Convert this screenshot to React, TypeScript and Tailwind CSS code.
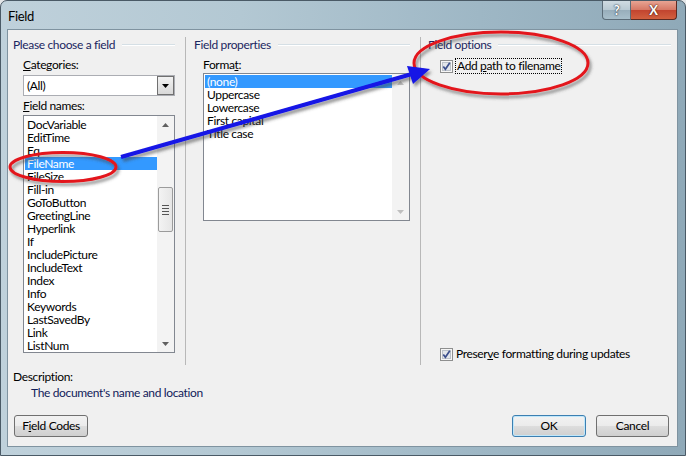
import React from 'react';

const fieldNames = [
  'DocVariable', 'EditTime', 'Eq', 'FileName', 'FileSize', 'Fill-in', 'GoToButton', 'GreetingLine',
  'Hyperlink', 'If', 'IncludePicture', 'IncludeText', 'Index', 'Info', 'Keywords', 'LastSavedBy',
  'Link', 'ListNum',
];

const formats = ['(none)', 'Uppercase', 'Lowercase', 'First capital', 'Title case'];

const btn =
  'h-[22px] rounded-[3px] border text-[12px] leading-[20px] text-center bg-[linear-gradient(#f2f2f2_0%,#ebebeb_50%,#dddddd_51%,#cfcfcf_100%)]';

const Arrow = ({ up, color }: { up?: boolean; color: string }) => (
  <svg width="7" height="4" viewBox="0 0 7 4">
    <path d={up ? 'M0 4 L3.5 0 L7 4 Z' : 'M0 0 L3.5 4 L7 0 Z'} fill={color} />
  </svg>
);

const CheckBox = () => (
  <svg width="13" height="13" viewBox="0 0 13 13" className="shrink-0">
    <rect x="0.5" y="0.5" width="12" height="12" fill="#f6f6f6" stroke="#8e8f8f" />
    <rect x="2.5" y="2.5" width="8" height="8" fill="#e3e6ea" stroke="#bcc2c9" />
    <path d="M3.3 6.4 L5.4 9.2 L9.8 2.8" stroke="#3c4f8c" strokeWidth="1.7" fill="none" />
  </svg>
);

const GroupHeader = ({ label, pl, mr }: { label: string; pl: string; mr: string }) => (
  <div className={`flex items-center h-[16px] ${pl}`}>
    <span className="text-[#1b2660] leading-[16px] whitespace-nowrap">{label}</span>
    <div className={`flex-1 ml-[7px] h-[2px] border-t border-[#d5dfe5] border-b-white border-b ${mr}`} />
  </div>
);

const App: React.FC = () => {
  return (
    <div className="relative w-[686px] h-[456px] bg-[#e3e6e8] font-['Lato',sans-serif] text-[12px] tracking-[-0.35px] text-black overflow-hidden">
      <div className="w-[686px] h-[456px] rounded-t-[7px] border border-[#4a5a66] bg-[linear-gradient(90deg,#bfd1db_0%,#b3c8d3_35%,#9eb7c5_70%,#8fa9b8_100%)] flex flex-col">
        {/* Title bar */}
        <div className="h-[28px] flex items-start justify-between pl-[7px] pr-[8px]">
          <span className="mt-[7px] leading-[16px] text-[13px]">Field</span>
          <div className="flex">
            <div className="w-[29px] h-[19px] rounded-bl-[4px] border border-[#5b6c78] border-t-0 bg-[linear-gradient(#cfdbe2_0%,#b8c9d3_50%,#98aebb_51%,#a8bfcb_100%)] flex items-center justify-center">
              <span className="text-white font-bold text-[13px] leading-none [text-shadow:0_0_2px_#2a3a46,0_0_1px_#2a3a46]">?</span>
            </div>
            <div className="w-[46px] h-[19px] rounded-br-[4px] border border-[#5d2a22] border-t-0 border-l-0 bg-[linear-gradient(#e8a493_0%,#d67764_50%,#c2442f_51%,#d2603f_100%)] flex items-center justify-center">
              <span className="text-white font-bold text-[13px] leading-none [text-shadow:0_0_2px_#4a1a12,0_0_1px_#4a1a12]">X</span>
            </div>
          </div>
        </div>

        {/* Client area */}
        <div className="ml-[6px] w-[671px] h-[418px] border border-[#7f93a0] bg-[#f0f0f0] flex flex-col">
          <div className="h-[335px] pt-[7px] flex">
            {/* Left column */}
            <div className="w-[177px] flex flex-col">
              <GroupHeader label="Please choose a field" pl="pl-[5px]" mr="mr-[10px]" />
              <div className="pl-[15px] flex flex-col">
                <span className="mt-[4px] leading-[16px]"><u>C</u>ategories:</span>
                <div className="mt-[2px] w-[152px] h-[21px] border border-[#abadb3] bg-white flex items-center">
                  <span className="flex-1 pl-[3px] leading-[16px]">(All)</span>
                  <div className="w-[17px] h-[19px] border border-[#707070] bg-[linear-gradient(#f2f2f2,#d8d8d8)] flex items-center justify-center">
                    <Arrow color="#000" />
                  </div>
                </div>
                <span className="mt-[2px] leading-[16px]"><u>F</u>ield names:</span>
                <div className="mt-[1px] w-[152px] h-[238px] border border-[#828790] bg-white flex">
                  <div className="flex-1 pt-[2px] pl-[1px]">
                    {fieldNames.map(name => (
                      <div
                        key={name}
                        className={`h-[13px] leading-[13px] pl-[2px] whitespace-nowrap ${
                          name === 'FileName' ? 'bg-[#3399ff] text-white' : ''
                        }`}
                      >
                        {name}
                      </div>
                    ))}
                  </div>
                  <div className="w-[17px] bg-[#f3f3f3] flex flex-col items-center">
                    <div className="h-[17px] flex items-center justify-center"><Arrow up color="#606060" /></div>
                    <div className="flex-1 w-full px-[1px] pt-[54px]">
                      <div className="h-[45px] rounded-[2px] border border-[#9b9b9b] bg-[linear-gradient(90deg,#f3f3f3,#e6e6e6)] flex flex-col items-center justify-center gap-[2px]">
                        <div className="w-[7px] h-px bg-[#555]" />
                        <div className="w-[7px] h-px bg-[#555]" />
                        <div className="w-[7px] h-px bg-[#555]" />
                        <div className="w-[7px] h-px bg-[#555]" />
                      </div>
                    </div>
                    <div className="h-[17px] flex items-center justify-center"><Arrow color="#606060" /></div>
                  </div>
                </div>
              </div>
            </div>

            {/* Middle column */}
            <div className="w-[235px] h-full border-l border-[#b8b8b8] flex flex-col">
              <GroupHeader label="Field properties" pl="pl-[8px]" mr="mr-[10px]" />
              <div className="pl-[17px] flex flex-col">
                <span className="mt-[4px] leading-[16px]">Forma<u>t</u>:</span>
                <div className="w-[207px] h-[148px] border border-[#828790] bg-white flex">
                  <div className="flex-1 pt-[1px] pl-[1px]">
                    {formats.map(f => (
                      <div
                        key={f}
                        className={`h-[13px] leading-[13px] pl-[2px] whitespace-nowrap ${
                          f === '(none)' ? 'bg-[#3399ff] text-white' : ''
                        }`}
                      >
                        {f}
                      </div>
                    ))}
                  </div>
                  <div className="w-[17px] bg-[#f3f3f3] flex flex-col justify-between">
                    <div className="h-[17px] flex items-center justify-center"><Arrow up color="#bfbfbf" /></div>
                    <div className="h-[17px] flex items-center justify-center"><Arrow color="#bfbfbf" /></div>
                  </div>
                </div>
              </div>
            </div>

            {/* Right column */}
            <div className="flex-1 h-full border-l border-[#b8b8b8] flex flex-col">
              <GroupHeader label="Field options" pl="pl-[7px]" mr="mr-[6px]" />
              <div className="mt-[5px] pl-[19px] flex items-center gap-[2px] h-[16px]">
                <CheckBox />
                <span className="leading-[14px] px-[1px] border border-dotted border-black">
                  Add <u>p</u>ath to filename
                </span>
              </div>
              <div className="mt-auto mb-[3px] pl-[19px] flex items-center gap-[3px] h-[16px]">
                <CheckBox />
                <span className="leading-[16px]">Preser<u>v</u>e formatting during updates</span>
              </div>
            </div>
          </div>

          {/* Description */}
          <div className="mt-[4px] pl-[5px] leading-[16px]">Description:</div>
          <div className="pl-[23px] leading-[16px] text-[#10205a]">The document's name and location</div>

          {/* Buttons */}
          <div className="mt-[14px] px-[6px] pr-[8px] flex items-center">
            <button className={`${btn} w-[74px] border-[#707070]`}>
              F<u>i</u>eld Codes
            </button>
            <div className="flex-1" />
            <button className={`${btn} w-[74px] border-[#3c7fb1] shadow-[inset_0_0_0_1px_#bfe7fb]`}>OK</button>
            <button className={`${btn} w-[73px] ml-[10px] border-[#707070]`}>Cancel</button>
          </div>
        </div>
      </div>

      {/* Annotations */}
      <svg className="absolute inset-0 pointer-events-none" width="686" height="456" viewBox="0 0 686 456">
        <defs>
          <filter id="shadow" x="-20%" y="-20%" width="140%" height="140%">
            <feDropShadow dx="2" dy="3" stdDeviation="1.5" floodColor="#444" floodOpacity="0.55" />
          </filter>
        </defs>
        <g filter="url(#shadow)">
          <ellipse cx="63" cy="167" rx="53" ry="14.5" fill="none" stroke="#e3141b" strokeWidth="3" />
          <ellipse cx="501" cy="63" rx="87" ry="31" fill="none" stroke="#e3141b" strokeWidth="3" />
          <line x1="121" y1="157" x2="412" y2="74" stroke="#1414e6" strokeWidth="4" />
          <path d="M430 69 L407 66 L413 84 Z" fill="#1414e6" />
        </g>
      </svg>
    </div>
  );
};

export default App;
